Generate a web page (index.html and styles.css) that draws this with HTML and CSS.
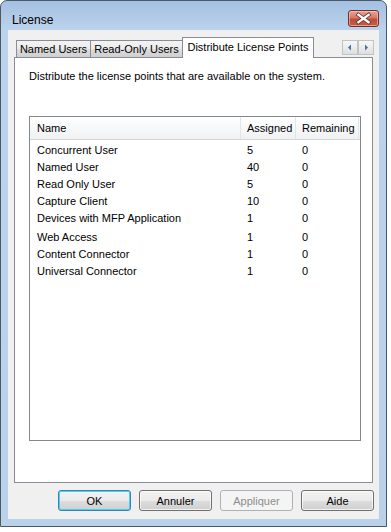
FILE: index.html
```html
<!DOCTYPE html>
<html lang="en">
<head>
    <meta charset="UTF-8">
    <title>License</title>
    <link rel="stylesheet" href="styles.css">
</head>
<body>
    <div class="window">
        <div class="titlebar">
            <span class="title">License</span>
            <button class="close" aria-label="Close">
                <svg width="31" height="17" viewBox="0 0 31 17">
                    <path d="M10 4.5 L21 12.5 M21 4.5 L10 12.5" stroke="#6b3a33" stroke-width="4.2" stroke-linecap="square"/>
                    <path d="M10 4.5 L21 12.5 M21 4.5 L10 12.5" stroke="#ffffff" stroke-width="2.4" stroke-linecap="square"/>
                </svg>
            </button>
        </div>

        <div class="client">
            <div class="tabs">
                <div class="tab tab-named">Named Users</div>
                <div class="tab tab-readonly">Read-Only Users</div>
                <div class="tab tab-points active">Distribute License Points</div>
                <div class="tab-scroll">
                    <span class="arrow">
                        <svg width="14" height="13" viewBox="0 0 14 13"><path d="M5 6.5 L8 3.5 L8 9.5 Z" fill="#4a6fa5"/></svg>
                    </span>
                    <span class="arrow">
                        <svg width="14" height="13" viewBox="0 0 14 13"><path d="M9 6.5 L6 3.5 L6 9.5 Z" fill="#4a6fa5"/></svg>
                    </span>
                </div>
            </div>

            <div class="panel">
                <p class="intro">Distribute the license points that are available on the system.</p>

                <div class="list">
                    <div class="list-head">
                        <div class="col col-name">Name</div>
                        <div class="col col-assigned">Assigned</div>
                        <div class="col col-remaining">Remaining</div>
                    </div>
                    <div class="list-body">
                        <div class="row"><div class="col col-name">Concurrent User</div><div class="col col-assigned">5</div><div class="col col-remaining">0</div></div>
                        <div class="row"><div class="col col-name">Named User</div><div class="col col-assigned">40</div><div class="col col-remaining">0</div></div>
                        <div class="row"><div class="col col-name">Read Only User</div><div class="col col-assigned">5</div><div class="col col-remaining">0</div></div>
                        <div class="row"><div class="col col-name">Capture Client</div><div class="col col-assigned">10</div><div class="col col-remaining">0</div></div>
                        <div class="row"><div class="col col-name">Devices with MFP Application</div><div class="col col-assigned">1</div><div class="col col-remaining">0</div></div>
                        <div class="row row-gap"><div class="col col-name">Web Access</div><div class="col col-assigned">1</div><div class="col col-remaining">0</div></div>
                        <div class="row"><div class="col col-name">Content Connector</div><div class="col col-assigned">1</div><div class="col col-remaining">0</div></div>
                        <div class="row"><div class="col col-name">Universal Connector</div><div class="col col-assigned">1</div><div class="col col-remaining">0</div></div>
                    </div>
                </div>
            </div>

            <div class="buttons">
                <button class="btn default">OK</button>
                <button class="btn">Annuler</button>
                <button class="btn" disabled>Appliquer</button>
                <button class="btn">Aide</button>
            </div>
        </div>
    </div>
</body>
</html>
```

FILE: styles.css
```css
* {
    box-sizing: border-box;
}

body {
    margin: 0;
    background: #ffffff;
    font-family: "Liberation Sans", Arial, sans-serif;
    font-size: 11px;
    color: #000;
}

.window {
    width: 387px;
    height: 527px;
    padding: 0 7px 7px 7px;
    border: 1px solid #4d5866;
    border-radius: 7px 7px 0 0;
    background: linear-gradient(to bottom, #a4c0e2 0px, #bcd3ec 30px, #bad1ea 100%);
    display: flex;
    flex-direction: column;
}

.titlebar {
    height: 29px;
    display: flex;
    align-items: flex-start;
    justify-content: space-between;
    padding-left: 4px;
}

.title {
    font-size: 12px;
    line-height: 14px;
    margin-top: 12px;
    color: #000;
}

.close {
    width: 31px;
    height: 17px;
    margin-top: 9px;
    padding: 0;
    border: 1px solid #7a2e26;
    border-radius: 3px;
    background: linear-gradient(to bottom, #e8a497 0%, #d57867 45%, #c24b35 55%, #c95c45 100%);
    box-shadow: inset 0 0 0 1px rgba(255, 220, 210, 0.5);
    display: flex;
    align-items: center;
    justify-content: center;
}

.close svg {
    display: block;
}

.client {
    flex: 1;
    background: #f0f0f0;
    padding: 7px 6px 8px 6px;
    display: flex;
    flex-direction: column;
}

/* tabs */
.tabs {
    height: 21px;
    margin-bottom: -1px;
    padding-left: 2px;
    display: flex;
    align-items: flex-end;
    position: relative;
    z-index: 1;
}

.tab {
    height: 17px;
    margin-bottom: 1px;
    border: 1px solid #898c95;
    border-bottom: none;
    background: linear-gradient(to bottom, #f3f3f3 0%, #ebebeb 50%, #dddddd 51%, #cfcfcf 100%);
    text-align: center;
    line-height: 17px;
    white-space: nowrap;
}

.tab-named {
    width: 75px;
}

.tab-readonly {
    width: 93px;
    margin-left: -1px;
}

.tab-points {
    width: 132px;
    margin-left: -1px;
}

.tab.active {
    height: 21px;
    margin-bottom: 0;
    background: #ffffff;
    line-height: 18px;
}

.tab-scroll {
    margin-left: auto;
    margin-right: -1px;
    align-self: flex-start;
    margin-top: 3px;
    display: flex;
}

.arrow {
    width: 16px;
    height: 15px;
    border: 1px solid #c3c3c3;
    background: linear-gradient(to bottom, #f7f7f7 0%, #ececec 50%, #dedede 100%);
    display: flex;
    align-items: center;
    justify-content: center;
}

.arrow + .arrow {
    margin-left: 0;
}

/* panel */
.panel {
    flex: 1;
    background: #ffffff;
    border: 1px solid #898c95;
    padding: 12px 11px 0 14px;
}

.intro {
    margin: 0;
    line-height: 13px;
}

.list {
    margin-top: 33px;
    height: 325px;
    border: 1px solid #828790;
    background: #ffffff;
}

.list-head {
    height: 23px;
    display: flex;
    border-bottom: 1px solid #d5d5d5;
    background: linear-gradient(to bottom, #ffffff 0%, #f7f8f9 50%, #f0f1f2 100%);
}

.list-head .col {
    line-height: 22px;
    border-right: 1px solid #e3e5e7;
}

.col {
    white-space: nowrap;
}

.col-name {
    width: 211px;
    padding-left: 7px;
}

.col-assigned {
    width: 55px;
    padding-left: 6px;
}

.col-remaining {
    width: 63px;
    padding-left: 6px;
}

.list-body {
    padding-top: 2px;
}

.row {
    height: 17px;
    line-height: 17px;
    display: flex;
}

.row-gap {
    height: 19px;
    padding-top: 2px;
}

/* buttons */
.buttons {
    margin-top: 7px;
    margin-right: -1px;
    display: flex;
    justify-content: flex-end;
    gap: 8px;
}

.btn {
    width: 73px;
    height: 21px;
    padding: 0;
    font-family: "Liberation Sans", Arial, sans-serif;
    font-size: 11px;
    color: #000;
    border: 1px solid #707070;
    border-radius: 3px;
    background: linear-gradient(to bottom, #f2f2f2 0%, #ebebeb 50%, #dddddd 51%, #cfcfcf 100%);
    box-shadow: inset 0 0 0 1px rgba(255, 255, 255, 0.7);
}

.btn.default {
    border-color: #3c7fb1;
    box-shadow: inset 0 0 0 1px #48d2f8;
}

.btn:disabled {
    color: #8d8d8d;
    border-color: #adb2b5;
    background: #f4f4f4;
    box-shadow: none;
}
```
